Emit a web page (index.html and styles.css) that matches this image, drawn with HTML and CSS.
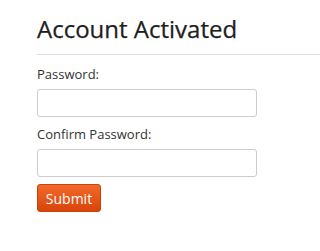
FILE: index.html
```html
<!DOCTYPE html>
<html>
<head>
<meta charset="utf-8">
<link rel="stylesheet" href="styles.css">
</head>
<body>
<div class="page">
  <h1 class="title">Account Activated</h1>
  <form class="form">
    <label class="label" for="pw">Password:</label>
    <input class="field" id="pw" type="password">
    <label class="label" for="pw2">Confirm Password:</label>
    <input class="field" id="pw2" type="password">
    <button class="submit" type="button">Submit</button>
  </form>
</div>
</body>
</html>
```

FILE: styles.css
```css
html, body {
  margin: 0;
  padding: 0;
  background: #fff;
}
body {
  font-family: "Open Sans", "DejaVu Sans", sans-serif;
  color: #333;
  overflow: hidden;
}
.page {
  padding: 14px 0 0 37px;
}
.title {
  margin: 0;
  font-size: 24px;
  font-weight: 400;
  line-height: 30px;
  color: #1e1e1e;
  padding-bottom: 10px;
  border-bottom: 1px solid #ddd;
  -webkit-text-stroke: 0.25px #1e1e1e;
}
.form {
  display: flex;
  flex-direction: column;
  align-items: flex-start;
  padding-top: 10px;
}
.label {
  font-size: 13px;
  line-height: 18px;
  color: #333;
  margin-bottom: 6px;
}
.field {
  box-sizing: border-box;
  width: 220px;
  height: 28px;
  border: 1px solid #ccc;
  border-radius: 3px;
  margin: 0 0 8px 0;
  padding: 4px 6px;
  background: #fff;
}
.submit {
  box-sizing: border-box;
  width: 64px;
  height: 28px;
  margin-top: -1px;
  font-family: "Open Sans", "DejaVu Sans", sans-serif;
  font-size: 14px;
  color: #fff;
  border: 1px solid #c94308;
  border-radius: 3px;
  background: linear-gradient(#f26a2a, #d8440a);
  padding: 0;
}
```
